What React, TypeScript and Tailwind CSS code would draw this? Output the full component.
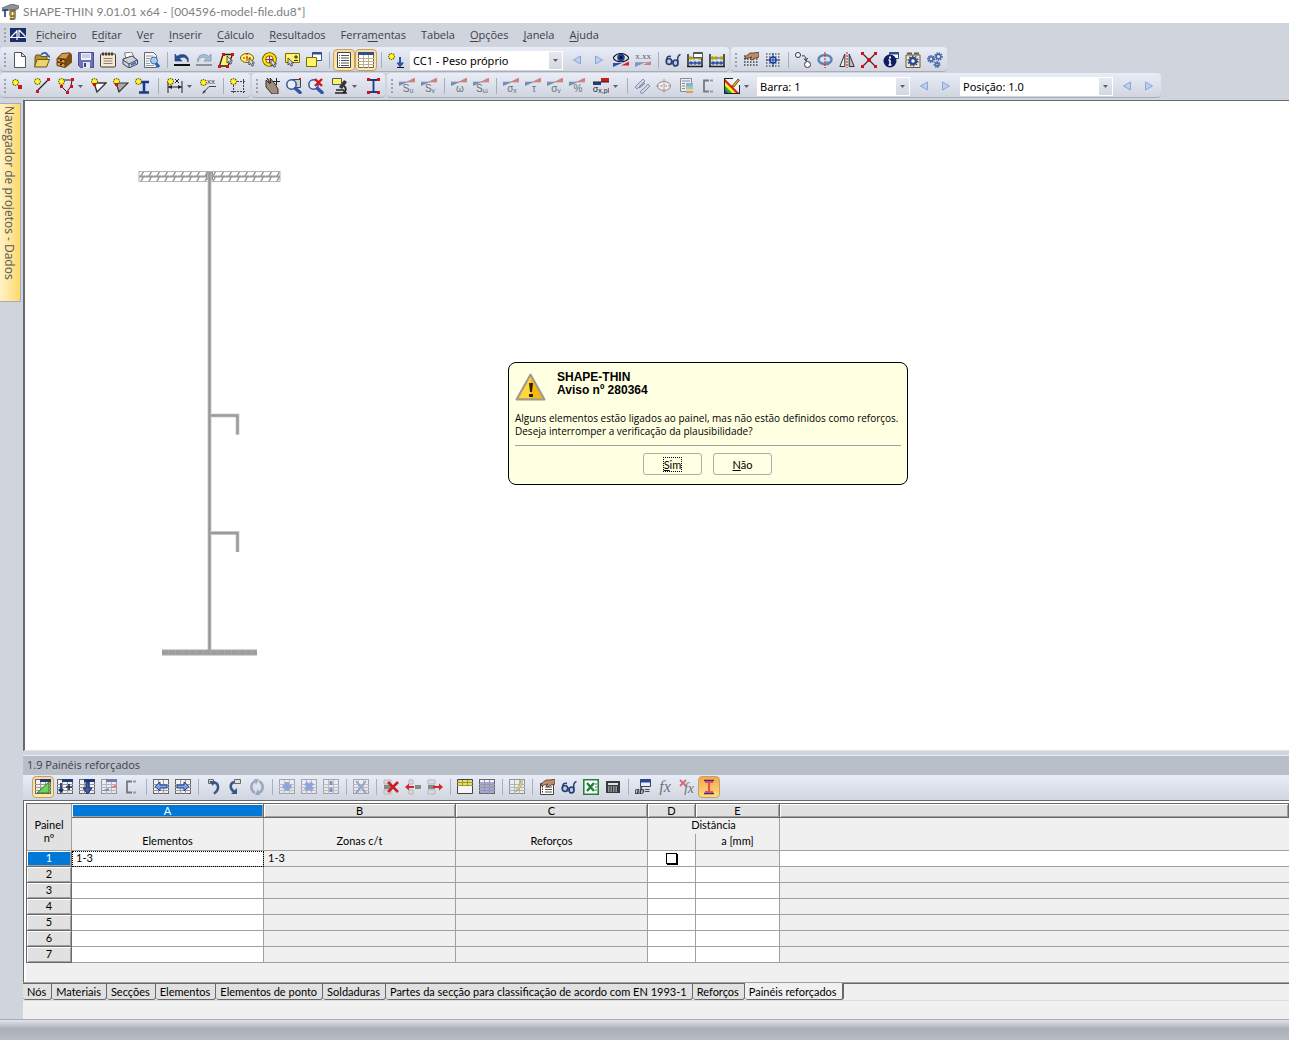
import type { ReactNode } from "react";
import clsx from "clsx";

/* ---------- small drawing parts shared by the icons ---------- */

function Star({ x = 0, y = 0 }: { x?: number; y?: number }) {
  return (
    <g transform={`translate(${x} ${y})`}>
      <path d="M3.500 0v7M0 3.500h7M1 1l5 5M6 1l-5 5" stroke="#6f6800" strokeWidth="1.500" />
      <path d="M3.500 1v5M1 3.500h5" stroke="#fff200" strokeWidth="2.600" />
      <path d="M3.500 2.500v2M2.500 3.500h2" stroke="#fffbb0" />
    </g>
  );
}

function Dot({ x, y, s = 3 }: { x: number; y: number; s?: number }) {
  return <rect x={x} y={y} width={s} height={s} fill="#d80f16" />;
}

function Cursor({ x, y }: { x: number; y: number }) {
  return (
    <path
      d={`M${x} ${y}v7l1.700-1.500 1.300 2.700 1.600-.800-1.300-2.500h2.200z`}
      fill="#d9d9d9"
      stroke="#333"
      strokeWidth=".8"
    />
  );
}

function Wedge() {
  return (
    <g opacity=".65">
      <path d="M0 4h9L0 8z" fill="#3b5ea8" />
      <path d="M7 4l9-4.500V4z" fill="#d9463c" />
      <path d="M0 4h16" stroke="#777" strokeWidth=".7" />
    </g>
  );
}

function WedgeText({ text, sub }: { text: string; sub?: string }) {
  return (
    <>
      <Wedge />
      <text x="9" y="14" textAnchor="middle" fontSize="10" fill="#6d7077" fontFamily="Liberation Sans, sans-serif">
        {text}
        {sub && <tspan fontSize="7" dy="1">{sub}</tspan>}
      </text>
    </>
  );
}

function MiniGrid({ faded }: { faded?: boolean }) {
  return (
    <g opacity={faded ? 0.5 : 1}>
      <rect x=".5" y=".5" width="15" height="14" fill="#f1f1f1" stroke="#666" />
      <path d="M0 5.500h16M0 8.500h16M0 11.500h16M5.500 1v14M10.500 1v14" stroke="#999" />
    </g>
  );
}

function BlueHeadGrid() {
  return (
    <>
      <MiniGrid />
      <path d="M5 0h11v3H5z" fill="#203a78" />
    </>
  );
}

function Abacus() {
  return (
    <>
      <path d="M1 2v13M15 2v13M0 14.500h16" stroke="#222" strokeWidth="1.500" />
      <path d="M1 6h14M1 11h14" stroke="#555" />
      <path d="M3.500 6h.1M7 6h.1M12.500 6h.1" stroke="#b5a200" strokeWidth="3.500" strokeLinecap="round" />
      <path d="M4 11h.1M8 11h.1M12 11h.1" stroke="#2f55a8" strokeWidth="3.500" strokeLinecap="round" />
    </>
  );
}

function Gear({ cx, cy, r }: { cx: number; cy: number; r: number }) {
  return (
    <>
      <circle cx={cx} cy={cy} r={r} fill="none" stroke="#4468a8" strokeWidth="2" strokeDasharray="1.300 .9" />
      <circle cx={cx} cy={cy} r={r - 1} fill="none" stroke="#4468a8" strokeWidth="1.400" />
    </>
  );
}

function Glasses() {
  return (
    <>
      <ellipse cx="4" cy="9.500" rx="2.800" ry="3" fill="#b9cdea" stroke="#263f70" strokeWidth="1.700" />
      <ellipse cx="10.500" cy="11" rx="2.500" ry="3" fill="#b9cdea" stroke="#263f70" strokeWidth="1.700" />
      <path d="M1.500 8.500C1.500 5 3 3.500 6 4.500M13 10c-1-4 0-7 2.500-7.500M7 9.500h1.500" fill="none" stroke="#263f70" strokeWidth="1.500" />
    </>
  );
}

function Magnifier({ x = 0, y = 0 }: { x?: number; y?: number }) {
  return (
    <g transform={`translate(${x} ${y})`}>
      <circle cx="5.500" cy="5.500" r="4.700" fill="#e5effa" stroke="#34549a" strokeWidth="1.500" />
      <path d="M9.500 9.500l4.500 4" stroke="#2f56a8" strokeWidth="3.500" strokeLinecap="round" />
    </g>
  );
}

function Hand() {
  return (
    <path
      d="M2 5l5-4h4l5-1v5l-4 1-3 2-2-1 2-2-4 1-3 1z"
      fill="#c08d68"
      stroke="#4b2f20"
      strokeWidth=".8"
    />
  );
}

function RowStack() {
  return (
    <>
      <path d="M1 1h7v4H1zM1 11h7v4H1z" fill="#dcdcdc" stroke="#b5b5b5" />
      <path d="M1 6h7v4H1z" fill="#888" />
    </>
  );
}

const ARROW_LEFT = "M2 7.500l5-4.500v3h7v3H7v3z";

const ICONS: Record<string, ReactNode> = {
  "Novo": <path d="M2.500.5h7l4 4v11h-11zM9.500.5v4h4" fill="#fff" stroke="#555" />,
  "Abrir": (
    <>
      <path d="M1 5l1-2h4l1 1.500h6V14H1z" fill="#b8922e" stroke="#6b5616" />
      <path d="M3 7.500h12.500l-3 7.500H.5z" fill="#ecd36c" stroke="#6b5616" />
      <path d="M7 3c2-3 6-3 7 1" fill="none" stroke="#39659f" strokeWidth="1.800" />
      <path d="M11.500 3.500H16V6z" fill="#39659f" />
    </>
  ),
  "Gestor de projetos": (
    <>
      <path d="M6 1l8-.5 2 2v8l-6 5-9-2.500V6z" fill="#7c4d12" />
      <path d="M1 6.500l8 1.500v3.500L1 9.500zM1 10l8 2v3.500l-8-2z" fill="#e0a146" stroke="#5a360a" />
      <path d="M6 1.500l8-.5-4 6-8-1z" fill="#d39a48" stroke="#5a360a" strokeWidth=".6" />
      <path d="M4 8.500h2M4 12.500h2" stroke="#2b1a05" strokeWidth="1.500" />
    </>
  ),
  "Guardar": (
    <>
      <path d="M.5.5h15v15h-13l-2-2z" fill="#6c70ba" stroke="#4b4e92" />
      <path d="M3 1h10v7H3z" fill="#eef0fa" />
      <path d="M4 3h8M4 5h8" stroke="#a7abd0" />
      <path d="M5 10h7v6H5z" fill="#e6e6ee" />
      <path d="M6 11h2v4H6z" fill="#3e4180" />
    </>
  ),
  "Relatório": (
    <>
      <rect x=".5" y="2" width="15" height="13" rx="1" fill="#f4ead6" stroke="#4c3a29" />
      <path d="M2 2h12" stroke="#4c3a29" strokeWidth="3" strokeDasharray="2 1" />
      <path d="M3.500 6.500h9M3.500 9h9M3.500 11.500h9" stroke="#8f7c66" />
    </>
  ),
  "Imprimir": (
    <>
      <path d="M2.500 1l7-1 3 6-8 2z" fill="#fff" stroke="#777" />
      <path d="M1 7l9-3 5.500 4v4l-8.500 4-6-4z" fill="#cdd2dc" stroke="#3f4452" />
      <path d="M1 8l6 4 8-4M7 12v4" fill="none" stroke="#3f4452" />
      <path d="M9 13l5-2.500" stroke="#3968b6" strokeWidth="1.800" />
    </>
  ),
  "Pré-visualizar": (
    <>
      <path d="M.5.500h9l3 3v12H.5z" fill="#f4f6fa" stroke="#666" />
      <path d="M2 4h7M2 6.500h4M2 9h3M2 11.500h4M2 13.500h8" stroke="#999" />
      <circle cx="10" cy="8.500" r="3.500" fill="#a8ccec" stroke="#3a6ea8" />
      <path d="M12 11.500l3 3.500" stroke="#2e5ea6" strokeWidth="3" />
    </>
  ),
  "Anular": (
    <>
      <path d="M1 2v7h7L5.500 6.500C9 4 13 5 14 10c2-6-5-10-11-5.500z" fill="#2b4f96" stroke="#1b3568" strokeWidth=".6" />
      <path d="M0 13h16" stroke="#111" strokeWidth="2" />
    </>
  ),
  "Refazer": (
    <g opacity=".55">
      <path d="M15 2v7H8l2.500-2.500C7 4 3 5 2 10 0 4 7 0 13 4.500z" fill="#7fa2bd" stroke="#33607c" strokeWidth=".8" />
      <path d="M0 13h16" stroke="#555" strokeWidth="2" />
    </g>
  ),
  "Selecionar por paralelogramo": (
    <>
      <path d="M5 2.500h9.500L10 14H1.500z" fill="#fff36a" stroke="#222" strokeWidth="1.300" />
      <Cursor x={9} y={4} />
      <Dot x={4} y={1} /><Dot x={13} y={1} /><Dot x={0} y={13} /><Dot x={8} y={13} />
    </>
  ),
  "Selecionar por elipse": (
    <>
      <ellipse cx="7" cy="6" rx="6.500" ry="4.500" fill="#fff36a" stroke="#6b6100" />
      <path d="M7 1v9M3 6h8" stroke="#d80f16" strokeDasharray="2 1" />
      <Cursor x={9} y={6} />
    </>
  ),
  "Selecionar por anel": (
    <>
      <circle cx="7.500" cy="7.500" r="5.300" fill="#e8edf6" stroke="#5c5400" strokeWidth="4" />
      <circle cx="7.500" cy="7.500" r="5.300" fill="none" stroke="#ffe800" strokeWidth="2.400" />
      <path d="M7.500 4v7M4 7.500h7" stroke="#d80f16" />
      <Cursor x={9} y={7} />
    </>
  ),
  "Seleção adicional": (
    <>
      <path d="M1.500 1.500h14v9h-14z" fill="#fff36a" stroke="#777000" />
      <path d="M12 3v4M10 5h4M10 8.500h4" stroke="#222" />
      <Cursor x={4} y={6} />
    </>
  ),
  "Nova janela": (
    <>
      <path d="M6.500.5h9v8h-9z" fill="#fff" stroke="#34518a" />
      <path d="M6 1.500h10" stroke="#34518a" strokeWidth="2" />
      <path d="M.5 5.500h10v9H.5z" fill="#fff36a" stroke="#777000" />
    </>
  ),
  "Navegador": (
    <>
      <path d="M1.500.5h13v15h-13z" fill="#fff" stroke="#444" />
      <path d="M5 3.500h8M5 6h8M5 8.500h8M5 11h8M5 13.500h8" stroke="#555" />
      <path d="M3.500 3v11" stroke="#2a54b0" strokeDasharray="1 1.500" />
    </>
  ),
  "Tabelas": (
    <>
      <path d="M.5.5h15v15H.5z" fill="#fff" stroke="#666" />
      <path d="M0 1.500h16" stroke="#344f85" strokeWidth="3" />
      <path d="M0 6.500h16M0 9.500h16M0 12.500h16M5.500 3v13M10.500 3v13" stroke="#c3ac86" />
    </>
  ),
  "Novo caso de carga": (
    <>
      <Star x={0} y={1} />
      <path d="M12 5v8M9.500 10.500L12 14l3-3.500" fill="none" stroke="#2755ad" strokeWidth="2" />
      <path d="M9 15.500h7" stroke="#111" />
    </>
  ),
  "Anterior": <path d="M11.500 4v8L4.500 8z" fill="#bcd0f2" stroke="#8aa5d6" />,
  "Seguinte": <path d="M4.500 4v8l7-4z" fill="#bcd0f2" stroke="#8aa5d6" />,
  "Mostrar resultados": (
    <>
      <path d="M0 6c4-6 12-6 16 0-4 5-12 5-16 0z" fill="#dfe6f2" stroke="#111" strokeWidth="1.200" />
      <circle cx="8" cy="5.500" r="3.800" fill="#1f3f90" />
      <circle cx="8" cy="5.500" r="1.500" fill="#050b20" />
      <path d="M0 11h9l-9 4z" fill="#2a4fae" /><path d="M8 13.500l8-4v4z" fill="#e02020" />
    </>
  ),
  "Mostrar valores": (
    <>
      <text x="8" y="6.500" textAnchor="middle" fontSize="9" fontFamily="Liberation Serif, serif" fill="#5d6066">x.xx</text>
      <g opacity=".65"><path d="M0 11h9l-9 4z" fill="#4c6fc0" /><path d="M8 13l8-4v4z" fill="#e04040" /><path d="M0 10.500h16" stroke="#888" /></g>
    </>
  ),
  "Verificar": <Glasses />,
  "Verificação de plausibilidade": <Glasses />,
  "Parâmetros de cálculo": (
    <>
      <Abacus />
      <path d="M6.500.5h9v5h-9z" fill="#fff" stroke="#555" /><path d="M6 1.500h10" stroke="#555" />
    </>
  ),
  "Calcular": <Abacus />,
  "Plano de trabalho": (
    <>
      <path d="M1 4h15M1 7h15M1 10h15M1 13h15" stroke="#444" strokeWidth="1.500" strokeDasharray="1.500 1.500" />
      <Hand />
    </>
  ),
  "Grelha": (
    <>
      <path d="M1 2h15M1 5h15M1 8h15M1 11h15M1 14h15" stroke="#666" strokeWidth="1.500" strokeDasharray="1.500 1.500" />
      <circle cx="8" cy="8" r="3" fill="#dfe7f8" stroke="#1c3f9c" strokeWidth="1.500" />
      <path d="M8 1v14M1 8h14" stroke="#1c3f9c" />
    </>
  ),
  "Mover ou copiar": (
    <>
      <circle cx="3" cy="3" r="2.500" fill="#fff" stroke="#333" />
      <circle cx="12.500" cy="12.500" r="3" fill="#fff" stroke="#333" />
      <path d="M7 4c3-1 4 1 4 4M9 6.500L11 9l1.500-3" fill="none" stroke="#333" />
    </>
  ),
  "Rodar": (
    <>
      <ellipse cx="8" cy="7.500" rx="6.500" ry="4.500" fill="none" stroke="#5f84b8" strokeWidth="2.500" />
      <path d="M8 0v16" stroke="#d80f16" strokeDasharray="2 1" />
      <path d="M9 9l4 1-2 4z" fill="#5f84b8" />
    </>
  ),
  "Espelhar": (
    <>
      <path d="M.8 14.500h5V2z" fill="#eee" stroke="#333" />
      <path d="M15.200 14.500h-5V2z" fill="#bbb" stroke="#333" />
      <path d="M8 0v16" stroke="#d80f16" strokeDasharray="2 1" />
    </>
  ),
  "Ligar linhas": (
    <>
      <path d="M1 1l14 14M15 1L1 15" stroke="#333" strokeWidth="1.300" />
      <Dot x={0} y={0} /><Dot x={13} y={0} /><Dot x={0} y={13} /><Dot x={13} y={13} /><Dot x={6} y={6} s={4} />
    </>
  ),
  "Informações": (
    <>
      <path d="M6.500.5h9v6h-9z" fill="#fff" stroke="#34518a" /><path d="M6 1.500h10" stroke="#34518a" strokeWidth="2" />
      <circle cx="7" cy="9" r="6.500" fill="#0e1c63" />
      <path d="M7 8v5M5.500 8H7M5.500 13h3" stroke="#fff" strokeWidth="1.500" /><path d="M6 4.500h2v2H6z" fill="#fff" />
    </>
  ),
  "Definições": (
    <>
      <path d="M1 3h14v12.500H1z" fill="#f2e4cc" stroke="#6b5a45" />
      <path d="M2 1.500h5M9 1.500h5" stroke="#6b5a45" strokeWidth="2" />
      <circle cx="8" cy="9" r="3" fill="#fff" stroke="#2c4b88" strokeWidth="2.500" />
      <circle cx="8" cy="9" r="4.800" fill="none" stroke="#2c4b88" strokeWidth="1.500" strokeDasharray="1.500 1.500" />
    </>
  ),
  "Configuração": <><Gear cx={4} cy={7} r={3} /><Gear cx={11.500} cy={4.500} r={3.300} /><Gear cx={10} cy={12.500} r={2.500} /></>,

  "Novo nó": <><Star x={0} y={1} /><Dot x={6} y={7} s={4} /></>,
  "Nova linha": <><path d="M3 13L14 2" stroke="#222" strokeWidth="1.300" /><Star /><Dot x={13} y={0} /><Dot x={2} y={12} /></>,
  "Nova polilinha": (
    <>
      <path d="M5 2h9l-1 6-4 6-6-6" fill="none" stroke="#222" />
      <Star /><Dot x={13} y={0} /><Dot x={12} y={7} /><Dot x={8} y={13} /><Dot x={2} y={7} />
    </>
  ),
  "Novo elemento": <><path d="M3 5h12L6 14z" fill="#fff" stroke="#333" strokeWidth="1.400" /><Star /><Dot x={2} y={5} /></>,
  "Novo elemento de ponto": <><path d="M3 5h12L6 14z" fill="#a9adb3" stroke="#333" strokeWidth="1.200" /><Star /><Dot x={2} y={5} /></>,
  "Nova secção": <><path d="M4 4h10M9 4v10M4 14.500h10" stroke="#173a8c" strokeWidth="2.500" /><Star /></>,
  "Nova cota": (
    <>
      <path d="M1 3v12M15 3v12M1 9h14" stroke="#222" /><path d="M1 9l4-2v4zM15 9l-4-2v4z" fill="#222" />
      <Star /><path d="M8 1l4 4M12 1L8 5" stroke="#222" />
    </>
  ),
  "Novo comentário": (
    <>
      <path d="M3 15L9 8.500h7" fill="none" stroke="#444" /><path d="M2 16l2-4 2 2z" fill="#444" /><Star y={1} />
      <text x="7" y="6" fontSize="8" fontFamily="Liberation Sans, sans-serif" fill="#444">xx</text>
    </>
  ),
  "Nova moldura": <><path d="M3.500 1v15M13.500 1v15M1 3.500h15M1 13.500h15" stroke="#444" strokeDasharray="2 1" /><Star /></>,
  "Agarrar": (
    <>
      <path d="M2 2l4 4-3-6 4 5-1-5 5 6 3 5v5H8L2 9z" fill="#9d8e7e" stroke="#3d3027" />
      <path d="M12.500 0v7M9 3.500h7" stroke="#222" />
    </>
  ),
  "Ampliar janela": <><path d="M6.500 1.500h8v8h-8z" fill="#c9cdd4" stroke="#444" /><Magnifier x={0} y={1} /><Dot x={13} y={0} s={2} /></>,
  "Mostrar tudo": <><Magnifier x={0} y={1} /><path d="M7 1l7 7M14 1L7 8" stroke="#d5141b" strokeWidth="2.400" /></>,
  "Vista": (
    <>
      <path d="M12 2L7 9l3 2 5-7z" fill="#333" />
      <path d="M4 12h8M3 15h12" stroke="#222" strokeWidth="1.500" />
      <path d="M12 8c3 2 2 5-1 7" stroke="#222" strokeWidth="2" />
      <path d="M.5.500h9v6h-9z" fill="#fff36a" stroke="#555" />
    </>
  ),
  "Perfil": (
    <>
      <path d="M3 2h11M8.500 2v12M3 14h11" stroke="#173a8c" strokeWidth="1.800" />
      <Dot x={2} y={0} /><Dot x={12} y={0} /><Dot x={2} y={13} /><Dot x={12} y={13} />
    </>
  ),
  "Su": <WedgeText text="S" sub="u" />,
  "Sv": <WedgeText text="S" sub="v" />,
  "ω": <WedgeText text="ω" />,
  "Sω": <WedgeText text="S" sub="ω" />,
  "σx": <WedgeText text="σ" sub="x" />,
  "τ": <WedgeText text="τ" />,
  "σv": <WedgeText text="σ" sub="v" />,
  "%": <WedgeText text="%" />,
  "σx,pl": (
    <>
      <path d="M0 4h8v3H0z" fill="#1d3f86" /><path d="M8 0h8v4H8z" fill="#cf1d16" /><path d="M0 4h16" stroke="#222" />
      <text x="8" y="14" textAnchor="middle" fontSize="9" fill="#222" fontFamily="Liberation Sans, sans-serif">
        σ<tspan fontSize="7" dy="1">x,pl</tspan>
      </text>
    </>
  ),
  "Partes c/t": (
    <g opacity=".75">
      <path d="M1 9L9 1l2 2-8 8zM6 14l8-8 2 2-8 8z" fill="#b9d3ee" stroke="#5f7fa6" />
      <path d="M5 10l6-5" stroke="#c0504a" strokeWidth="1.200" />
    </g>
  ),
  "Núcleo": (
    <g stroke="#8b8c90" fill="none">
      <ellipse cx="8" cy="8" rx="6.500" ry="4.500" fill="#eceef4" />
      <path d="M8 1v14M0 8h16" stroke="#c98a8a" strokeDasharray="3 1" />
    </g>
  ),
  "Resultados": (
    <g opacity=".8">
      <path d="M2.500.5h11v13h-11z" fill="#eef0f4" stroke="#777" />
      <path d="M4 3h8M4 5.500h3M4 8h3M4 10.500h3" stroke="#777" />
      <path d="M8 5h7v3H8z" fill="#7d9fd6" /><path d="M8 8h7v3H8z" fill="#8cc4a0" /><path d="M8 11h7v2H8z" fill="#e4dc7c" /><path d="M8 13h7v2H8z" fill="#d8856b" />
    </g>
  ),
  "Perfil C": (
    <>
      <path d="M9 2.500H4v11h5" fill="none" stroke="#77787c" strokeWidth="1.800" />
      <path d="M10 2.500h3M10 13.500h3" stroke="#9a9b9f" strokeWidth="1.800" />
    </>
  ),
  "Cores": (
    <>
      <path d="M0 0h16v16H0z" fill="#f3f3f3" />
      <path d="M0 0l16 16H0z" fill="#e01a1a" />
      <path d="M0 3l13 13H8.500L0 7.500z" fill="#f8ef1d" />
      <path d="M0 7l9 9H4.500L0 11.500z" fill="#22a834" />
      <path d="M0 11l5 5H0z" fill="#1c3fae" />
      <path d="M.5 0v15.500H16M0 .5h9M15.500 7v9" fill="none" stroke="#222" />
      <path d="M8 8l6-7 1.500 1L10 9z" fill="#e8b43c" stroke="#4c3311" strokeWidth=".8" />
    </>
  ),

  "Tabela ativa": <><BlueHeadGrid /><path d="M2 14L14 3v11z" fill="#71d35b" stroke="#2a7b25" /></>,
  "Inserir linha": <><BlueHeadGrid /><path d="M4 4v8M2 10l2 3 2-3M9 8h6M12 5v6" stroke="#1c2f63" strokeWidth="1.700" fill="none" /></>,
  "Próxima tabela": <><BlueHeadGrid /><path d="M7 3h3v6h3l-4.500 6L4 9h3z" fill="#3b5ca6" stroke="#1c2f63" /></>,
  "Diagrama": <g opacity=".6"><BlueHeadGrid /><path d="M0 12l8-3v3z" fill="#3b5ea8" /><path d="M8 9l8-4v4z" fill="#d9463c" /></g>,
  "Coluna anterior": <><MiniGrid /><path d={ARROW_LEFT} fill="#7ea2e8" stroke="#1f3f8c" /></>,
  "Coluna seguinte": <><MiniGrid /><path transform="translate(16 0) scale(-1 1)" d={ARROW_LEFT} fill="#7ea2e8" stroke="#1f3f8c" /></>,
  "Anular edição": <><path d="M3.500.500h5v4h-5z" fill="#ddd" stroke="#666" /><path d="M8 3.500c6 0 7 7 1 11" fill="none" stroke="#3a5684" strokeWidth="2.500" /><path d="M10 2H4l4 5z" fill="#3a5684" /></>,
  "Refazer edição": <><path d="M7.500.500h6v4h-6z" fill="#ddd" stroke="#666" /><path d="M7 3c-5 2-4 8 1 10" fill="none" stroke="#3a5684" strokeWidth="2.500" /><path d="M10 9v6H4z" fill="#3a5684" /></>,
  "Atualizar": <g opacity=".5"><path d="M6 14C1 11 1 5 6 2M10 2c5 3 5 9 0 12" fill="none" stroke="#5a7196" strokeWidth="2.500" /><path d="M5 0h5L7 6zM11 16H6l3-6z" fill="#5a7196" /></g>,
  "Adicionar": <><MiniGrid faded /><path d="M8 3v9M3.500 7.500h9" stroke="#8ea4dc" strokeWidth="4" /></>,
  "Multiplicar": <><MiniGrid faded /><path d="M4.500 4l7 7M11.500 4l-7 7" stroke="#8ea4dc" strokeWidth="4" /></>,
  "Dividir": <><MiniGrid faded /><path d="M6.500 2h3v4h-3zM6.500 9h3v4h-3z" fill="#7a92d0" /></>,
  "Limpar": <><MiniGrid faded /><path d="M3 2l10 12M13 2L3 14" stroke="#8fa2cc" strokeWidth="1.800" /></>,
  "Eliminar linha": <><RowStack /><path d="M5 3l10 10M15 3L5 13" stroke="#cd1b20" strokeWidth="2.500" /></>,
  "Mover para a esquerda": (
    <>
      <path d="M4 1h4v4H4zM4 11h4v4H4z" fill="#dcdcdc" stroke="#b5b5b5" />
      <path d="M10 6h6v4h-6z" fill="#888" />
      <path d="M0 8l4-3.500V7h5v2H4v2.500z" fill="#d3242a" />
    </>
  ),
  "Mover para a direita": <><RowStack /><path d="M16 8l-4-3.500V7H6v2h6v2.500z" fill="#d3242a" /></>,
  "Cabeçalho": <><path d="M.5.5h15v14H.5z" fill="#f5f5f5" stroke="#444" /><path d="M1 1h14v5H1z" fill="#e8e06a" /><path d="M0 6.500h16M0 3.500h16M5.500 1v5M10.500 1v5" stroke="#9a943c" /></>,
  "Ver tabela": <><MiniGrid /><path d="M1 4h14M1 7h14M1 10h14M1 13h14" stroke="#8f8fd0" strokeWidth="1.500" /></>,
  "Marcador": <g opacity=".65"><MiniGrid /><path d="M12 0c3 3 0 6-1 9l-4 4c0-3 5-7 5-13z" fill="#e7d94a" stroke="#9c8c1c" /></g>,
  "Propriedades": <><path d="M1.500 4.500h13v11h-13z" fill="#fff" stroke="#444" /><path d="M6 8h7M6 10.500h7M6 13h7" stroke="#555" /><path d="M3.500 7v7" stroke="#333" strokeDasharray="1.500 1" /><Hand /></>,
  "Excel": (
    <>
      <path d="M.8.8h14.400v14.400H.8z" fill="#fff" stroke="#23823a" strokeWidth="1.600" />
      <path d="M4 4l7 8M11 4l-7 8" stroke="#23823a" strokeWidth="2.500" /><path d="M12 5h2M12 8h2M12 11h2" stroke="#23823a" />
    </>
  ),
  "Calculadora": <><path d="M1 2h14v12H1z" fill="#373a40" /><path d="M3 4h10v2H3z" fill="#dfe5dd" /><path d="M3 8h10M3 10h10M3 12h10" stroke="#e9e9e9" strokeDasharray="1.500 1" /></>,
  "Variáveis": (
    <>
      <path d="M5.500.5h10v7h-10z" fill="#e8eefa" stroke="#345" /><path d="M5 2h11" stroke="#24489a" strokeWidth="3" />
      <text x="7" y="15" textAnchor="middle" fontSize="10" fontWeight="bold" fontStyle="italic" fontFamily="Liberation Serif, serif" fill="#222">ab=</text>
    </>
  ),
  "Fórmula": <text x="8" y="12.500" textAnchor="middle" fontSize="16" fontStyle="italic" fontFamily="Liberation Serif, serif" fill="#6f7278">fx</text>,
  "Eliminar fórmula": <><text x="10" y="14" textAnchor="middle" fontSize="14" fontStyle="italic" fontFamily="Liberation Serif, serif" fill="#6f7278">fx</text><path d="M1 1l6 6M7 1L1 7" stroke="#d46a70" strokeWidth="1.800" /></>,
  "Secção I": <><path d="M3 1.500h10M3 14.500h10" stroke="#173a9c" strokeWidth="1.500" /><path d="M4 3h8M8 3v10M4 13h8" stroke="#ee4a52" strokeWidth="2" /></>,
};

/* ---------- toolbar parts ---------- */

const PRESSED: Record<string, string> = {
  "Navegador": "rounded-sm border border-[#c2a26a] bg-linear-to-b from-[#fbd9a0] to-[#ffe9a8]",
  "Tabelas": "rounded-sm border border-[#c2a26a] bg-linear-to-b from-[#fbd9a0] to-[#ffe9a8]",
  "Tabela ativa": "rounded-sm border border-[#c2a26a] bg-linear-to-b from-[#fbd9a0] to-[#ffe9a8]",
  "Secção I": "rounded-sm border border-[#c2a26a] bg-linear-to-b from-[#f7a64c] to-[#ffdc78]",
};

function Arrow() {
  return (
    <svg className="h-[3px] w-[5px] shrink-0" viewBox="0 0 5 3">
      <path d="M0 0h5L2.500 3z" fill="#5f6269" />
    </svg>
  );
}

function Tool({ name, menu }: { name: string; menu?: boolean }) {
  return (
    <button
      type="button"
      aria-label={name}
      className={clsx(
        "flex h-[22px] shrink-0 items-center justify-center",
        menu ? "w-[35px] gap-1" : "w-[22px]",
        PRESSED[name]
      )}
    >
      <svg className="h-4 w-4 shrink-0" viewBox="0 0 16 16" fill="none">
        {ICONS[name]}
      </svg>
      {menu && <Arrow />}
    </button>
  );
}

// "|" is a separator, a trailing "+" opens a menu
function Tools({ items }: { items: string[] }) {
  return (
    <>
      {items.map((item, i) =>
        item === "|" ? (
          <span key={i} className="flex w-2 shrink-0 justify-center">
            <span className="h-4 w-px bg-[#a9afba]" />
          </span>
        ) : item.endsWith("+") ? (
          <Tool key={i} name={item.slice(0, -1)} menu />
        ) : (
          <Tool key={i} name={item} />
        )
      )}
    </>
  );
}

function Grip() {
  return (
    <svg className="mr-[3px] ml-1 h-4 w-[2px] shrink-0" viewBox="0 0 2 16">
      <path d="M1 1v15" stroke="#9da3ae" strokeWidth="2" strokeDasharray="2 2" />
    </svg>
  );
}

function Bar({ children }: { children: ReactNode }) {
  return (
    <div className="flex h-[25px] shrink-0 items-center rounded-sm border-b border-[#a9adb6] bg-linear-to-b from-[#e9edf7] to-[#d0d5df] pt-[2px] pr-px">
      <Grip />
      {children}
    </div>
  );
}

function Combo({ label, value }: { label: string; value: string }) {
  return (
    <div className="relative mx-[3px] h-[19px] w-[153px] shrink-0">
      <select
        aria-label={label}
        className="block h-[19px] w-full appearance-none bg-white pl-[3px] font-['Noto_Sans',sans-serif] text-[11px] leading-[17px] text-black"
      >
        <option>{value}</option>
      </select>
      <span className="pointer-events-none absolute inset-y-px right-px flex w-[13px] items-center justify-center bg-linear-to-b from-[#e6e9f0] to-[#d3d7e0]">
        <Arrow />
      </span>
    </div>
  );
}

/* ---------- page data ---------- */

// text before, access key, text after
const MENU: [string, string, string][] = [
  ["", "F", "icheiro"],
  ["E", "d", "itar"],
  ["V", "e", "r"],
  ["", "I", "nserir"],
  ["", "C", "álculo"],
  ["", "R", "esultados"],
  ["Ferra", "m", "entas"],
  ["Tabela", "", ""],
  ["", "O", "pções"],
  ["", "J", "anela"],
  ["", "A", "juda"],
];

const TABS = [
  "Nós",
  "Materiais",
  "Secções",
  "Elementos",
  "Elementos de ponto",
  "Soldaduras",
  "Partes da secção para classificação de acordo com EN 1993-1",
  "Reforços",
  "Painéis reforçados",
];

function SectionDrawing() {
  return (
    <svg className="absolute top-16 left-24 h-[500px] w-[180px]" viewBox="121 165 180 500" fill="none">
      <defs>
        <pattern id="hatch" width="8" height="5" patternUnits="userSpaceOnUse" x="139" y="171">
          <path d="M2 5l3-5" stroke="#8a8a8c" strokeWidth="1.300" />
        </pattern>
      </defs>
      <rect x="139" y="171.500" width="141" height="10" fill="url(#hatch)" stroke="#b4b4b6" />
      <path d="M139 176.500h141" stroke="#9b9b9d" strokeWidth="2" />
      <path d="M206 172h7v8h-7z" fill="#98989a" />
      <path d="M209.500 173v480" stroke="#cfcfd1" strokeWidth="4" />
      <path d="M209.500 173v480" stroke="#98989a" strokeWidth="2.500" />
      <path d="M210 415.500h27.500v19M210 533h27.500v19" stroke="#d5d5d7" strokeWidth="4" />
      <path d="M210 415.500h27.500v19M210 533h27.500v19" stroke="#9c9c9e" strokeWidth="2.500" />
      <path d="M162 652.500h95" stroke="#a8a8a9" strokeWidth="6" />
      <path d="M162 652.500h95" stroke="#9d9d9f" strokeWidth="4" strokeDasharray="6 1" />
    </svg>
  );
}

function WarningDialog() {
  return (
    <div
      role="alertdialog"
      aria-labelledby="warn-title"
      className="absolute top-[261px] left-[483px] w-[400px] rounded-lg border border-black bg-[#ffffe1] px-1.5 pt-2 pb-[9px] font-['Lato',sans-serif] text-[11px] leading-[13px] text-black"
    >
      <div className="flex gap-[10px]">
        <svg className="h-8 w-8 shrink-0 self-end" viewBox="0 0 32 32">
          <path d="M15.500 1.500L1.500 26.500h28z" fill="#f7b90d" stroke="#9a9a9a" strokeWidth="2" strokeLinejoin="round" />
          <path d="M15.500 4v21H4z" fill="#ffe14a" opacity=".8" />
          <path d="M14 10h4l-1 9h-2zM14 21h4v3h-4z" fill="#2a2318" />
        </svg>
        <h2 id="warn-title" className="pb-2 font-['Liberation_Sans',sans-serif] text-[12px] leading-[13px] font-bold">
          SHAPE-THIN
          <br />
          Aviso nº 280364
        </h2>
      </div>
      <p className="mt-[7px] font-['Open_Sans',sans-serif] text-[10px] whitespace-nowrap">
        Alguns elementos estão ligados ao painel, mas não estão definidos como reforços.
        <br />
        Deseja interromper a verificação da plausibilidade?
      </p>
      <hr className="mt-[7px] border-[#a0a0a0]" />
      <div className="mt-[7px] flex justify-center gap-[11px] pr-px">
        <button type="button" className="h-[22px] w-[59px] rounded-[3px] border border-[#adadad]">
          <span className="outline-1 outline-black outline-dotted">
            <u>S</u>im
          </span>
        </button>
        <button type="button" className="h-[22px] w-[59px] rounded-[3px] border border-[#adadad]">
          <u>N</u>ão
        </button>
      </div>
    </div>
  );
}

const LINE = "border-r border-b border-[#a0a0a0]";
const RAISED = "border-r border-b border-[#696969] p-0 font-normal shadow-[inset_1px_1px_0_#fff,inset_-1px_-1px_0_#a0a0a0]";

function PanelTable() {
  return (
    <table className="w-full table-fixed border-separate border-spacing-0 border-t border-l border-[#696969] text-center text-black">
      <colgroup>
        <col className="w-[45px]" />
        <col className="w-[192px]" />
        <col className="w-[192px]" />
        <col className="w-[192px]" />
        <col className="w-[48px]" />
        <col className="w-[84px]" />
        <col />
      </colgroup>
      <thead>
        <tr className="h-[14px] leading-[13px]">
          <th rowSpan={3} className="border-r border-b border-[#a0a0a0] bg-[#e1e1e1] p-0 pt-2 font-normal">
            Painel
            <br />
            nº
          </th>
          {["A", "B", "C", "D", "E"].map((c) => (
            <th key={c} className={clsx(RAISED, c === "A" ? "bg-[#0078d7] text-white" : "bg-[#e1e1e1]")}>
              {c}
            </th>
          ))}
          <th className={clsx(RAISED, "bg-[#e1e1e1]")} />
        </tr>
        <tr className="h-4 leading-[13px]">
          {["Elementos", "Zonas c/t", "Reforços"].map((h) => (
            <th key={h} rowSpan={2} className={clsx(LINE, "p-0 pb-[3px] align-bottom font-normal")}>{h}</th>
          ))}
          <th colSpan={2} className="border-r border-[#a0a0a0] p-0 pb-[3px] align-bottom font-normal">Distância</th>
          <th rowSpan={2} className="border-b border-[#a0a0a0] p-0" />
        </tr>
        <tr className="h-[17px] leading-[13px]">
          <th className={clsx(LINE, "p-0")} />
          <th className={clsx(LINE, "p-0 pb-[3px] align-bottom font-normal")}>a [mm]</th>
        </tr>
      </thead>
      <tbody>
        {[1, 2, 3, 4, 5, 6, 7].map((n) => {
          const first = n === 1;
          return (
            <tr key={n} className="h-4 leading-[13px]">
              <th scope="row" className={clsx(RAISED, "pb-[2px]", first ? "bg-[#0078d7] text-white" : "bg-[#e1e1e1]")}>
                {n}
              </th>
              <td className={clsx(LINE, "bg-white p-0 pb-[2px] pl-1 text-left", first && "outline-1 -outline-offset-1 outline-black outline-dotted")}>
                {first && "1-3"}
              </td>
              <td className={clsx(LINE, "p-0 pb-[2px] pl-1 text-left")}>{first && "1-3"}</td>
              <td className={clsx(LINE, "p-0")} />
              <td className={clsx(LINE, "bg-white p-0")}>
                {first && (
                  <input
                    type="checkbox"
                    aria-label="Distância"
                    className="mx-auto block h-[11px] w-[11px] appearance-none border border-black bg-white shadow-[1px_1px_0_#000]"
                  />
                )}
              </td>
              <td className={clsx(LINE, "p-0", !first && "bg-white")} />
              <td className={clsx("border-b border-[#a0a0a0] p-0", first && "bg-white")} />
            </tr>
          );
        })}
      </tbody>
    </table>
  );
}

export default function App() {
  return (
    <div className="flex min-h-screen flex-col overflow-hidden bg-[#d0d4dd] font-['Open_Sans',sans-serif]">
      <header className="flex h-[23px] items-center gap-1 bg-white pl-[2px]">
        <svg className="h-4 w-[17px]" viewBox="0 0 17 16" fill="none">
          <path d="M0 4l10-4 7 2-1 3-7 1-9 1z" fill="#8f9297" stroke="#5f6268" strokeWidth=".8" />
          <path d="M3 6v7M1 6h5" stroke="#2f4f9b" strokeWidth="1.800" />
          <text x="7" y="13" fontSize="12" fontWeight="bold" fill="#b9922e" stroke="#4c3b10" strokeWidth=".4" fontFamily="Liberation Sans, sans-serif">g</text>
        </svg>
        <h1 className="font-['Lato',sans-serif] text-[12px] text-[#808080]">SHAPE-THIN 9.01.01 x64 - [004596-model-file.du8*]</h1>
      </header>

      <nav className="flex h-6 items-center text-[11px] text-[#3d4148]">
        <Grip />
        <svg className="mr-[10px] ml-px h-[14px] w-4" viewBox="0 0 16 14" fill="none">
          <path d="M0 0h16v14H0z" fill="#1b2f6b" />
          <path d="M0 9.500h16M7 2v10M1 9l6-6M9 2l6.500 6.500M9 2v7" stroke="#fff" strokeWidth="1.200" />
        </svg>
        <div className="flex gap-[15px]">
          {MENU.map(([a, key, b]) => (
            <button key={a + key + b} type="button">
              {a}
              <span className="underline underline-offset-2">{key}</span>
              {b}
            </button>
          ))}
        </div>
      </nav>

      <div className="flex gap-[2px]">
        <Bar>
          <Tools items={["Novo", "Abrir", "Gestor de projetos", "Guardar", "Relatório", "Imprimir", "Pré-visualizar", "|", "Anular", "Refazer", "Selecionar por paralelogramo", "Selecionar por elipse", "Selecionar por anel", "Seleção adicional", "Nova janela", "|", "Navegador", "Tabelas", "|", "Novo caso de carga"]} />
          <Combo label="Caso de carga" value="CC1 - Peso próprio" />
          <Tools items={["Anterior", "Seguinte", "Mostrar resultados", "Mostrar valores", "|", "Verificar", "Parâmetros de cálculo", "Calcular"]} />
        </Bar>
        <Bar>
          <Tools items={["Plano de trabalho", "Grelha", "|", "Mover ou copiar", "Rodar", "Espelhar", "Ligar linhas", "Informações", "Definições", "Configuração"]} />
        </Bar>
      </div>
      <div className="mt-px mb-[2px] flex gap-[2px]">
        <Bar>
          <Tools items={["Novo nó", "Nova linha", "Nova polilinha+", "Novo elemento", "Novo elemento de ponto", "Nova secção", "|", "Nova cota+", "Novo comentário", "|", "Nova moldura"]} />
        </Bar>
        <Bar>
          <Tools items={["Agarrar", "Ampliar janela", "Mostrar tudo", "Vista+", "Perfil"]} />
        </Bar>
        <Bar>
          <Tools items={["Su", "Sv", "|", "ω", "Sω", "|", "σx", "τ", "σv", "%", "σx,pl+", "|", "Partes c/t", "Núcleo", "Resultados", "Perfil C", "Cores+"]} />
          <Combo label="Barra" value="Barra: 1" />
          <Tools items={["Anterior", "Seguinte"]} />
          <Combo label="Posição" value="Posição: 1.0" />
          <Tools items={["Anterior", "Seguinte"]} />
        </Bar>
      </div>

      <div className="flex flex-1">
        <aside className="w-[23px] shrink-0 pt-[3px]">
          <button
            type="button"
            className="h-[199px] w-[21px] border border-l-0 border-[#a5abba] bg-linear-to-r from-[#fff3c4] to-[#ffd869] pt-[2px] pr-[3px] text-left text-[12px] leading-4 text-[#55585f] [writing-mode:vertical-rl]"
          >
            Navegador de projetos - Dados
          </button>
        </aside>

        <div className="flex min-w-0 flex-1 flex-col">
          <main className="relative flex-1 border-t border-b border-l-2 border-t-[#696969] border-b-[#e3e3e3] border-l-[#696969] bg-white">
            <SectionDrawing />
            <WarningDialog />
          </main>

          <section className="mt-1 bg-[#f0f0f0] font-['Lato',sans-serif] text-[11px]">
            <h2 className="h-5 border-t border-[#e9edf7] bg-[#b9bfc9] pl-1 font-['Open_Sans',sans-serif] text-[11px] leading-[18px] text-[#3d4148]">
              1.9 Painéis reforçados
            </h2>
            <div className="flex h-[25px] items-start bg-linear-to-b from-[#e9edf7] to-[#d0d5df] pt-px pl-[9px]">
              <div className="flex items-center">
                <Tools items={["Tabela ativa", "Inserir linha", "Próxima tabela", "Diagrama", "Perfil C", "|", "Coluna anterior", "Coluna seguinte", "|", "Anular edição", "Refazer edição", "Atualizar", "|", "Adicionar", "Multiplicar", "Dividir", "|", "Limpar", "|", "Eliminar linha", "Mover para a esquerda", "Mover para a direita", "|", "Cabeçalho", "Ver tabela", "|", "Marcador", "|", "Propriedades", "Verificação de plausibilidade", "Excel", "Calculadora", "|", "Variáveis", "Fórmula", "Eliminar fórmula", "Secção I"]} />
              </div>
            </div>
            <div className="border-t border-l border-[#696969]">
              <div className="border-t-2 border-l-2 border-white pb-[19px]">
                <PanelTable />
              </div>
            </div>
            <div role="tablist" className="flex h-[18px] border-t border-[#a0a0a0] text-black">
              {TABS.map((tab, i) => {
                const active = i === TABS.length - 1;
                return (
                  <button
                    key={tab}
                    type="button"
                    role="tab"
                    aria-selected={active}
                    className={clsx(
                      "h-[17px] shrink-0 rounded-b-[3px] border-b border-[#696969] pr-[5px] pl-1 leading-[15px] whitespace-nowrap",
                      active ? "border-r-2 bg-[#f0f0f0]" : "border-t border-r bg-[#e1e1e1]"
                    )}
                  >
                    {tab}
                  </button>
                );
              })}
              <span className="flex-1 border-t border-[#696969]" />
            </div>
            <div className="h-[19px] border-t border-[#dcdcdc]" />
          </section>
        </div>
      </div>

      <footer className="h-[21px] border-t border-[#a9abb5] bg-linear-to-b from-[#e2e4ea] via-[#a9aeb9] via-45% to-[#b9bcc2]" />
    </div>
  );
}
